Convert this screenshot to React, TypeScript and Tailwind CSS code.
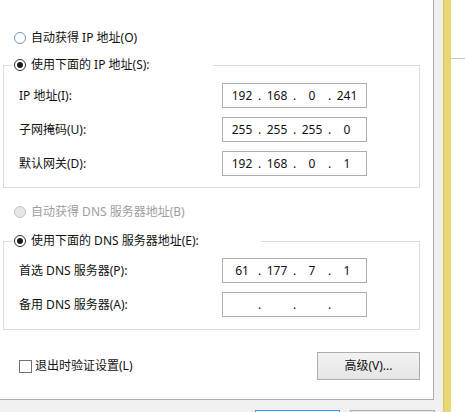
const font = { fontFamily: '"Noto Sans", "Noto Sans CJK SC", sans-serif' };

type Octets = [string, string, string, string];

const Radio = ({ checked, disabled }: { checked?: boolean; disabled?: boolean }) => {
  if (disabled) {
    return <span className="w-[12px] h-[12px] rounded-full border border-[#c4c4c4] bg-[#e6e6e6] shrink-0" />;
  }
  if (checked) {
    return (
      <span className="w-[12px] h-[12px] rounded-full border border-[#333333] bg-white shrink-0 flex items-center justify-center">
        <span className="w-[6px] h-[6px] rounded-full bg-[#1a1a1a]" />
      </span>
    );
  }
  return <span className="w-[12px] h-[12px] rounded-full border border-[#6f98c4] bg-white shrink-0" />;
};

const IpBox = ({ value }: { value: Octets }) => (
  <div className="w-[145px] h-[25px] border border-[#adadad] bg-white flex items-center pl-[6px] text-[12px] text-[#111]">
    {value.map((o, i) => (
      <div key={i} className="flex items-center">
        <span className="w-[26px] text-center">{o}</span>
        {i < 3 && <span className="w-[9px] text-center">.</span>}
      </div>
    ))}
  </div>
);

const Row = ({ label, value }: { label: string; value: Octets }) => (
  <div className="flex items-center h-[25px]">
    <span className="w-[218px] pl-[15px] text-[12px]">{label}</span>
    <IpBox value={value} />
  </div>
);

const Group = ({
  title,
  legendWidth,
  rows,
  top,
  bottom,
}: {
  title: string;
  legendWidth: string;
  rows: { label: string; value: Octets }[];
  top: string;
  bottom: string;
}) => (
  <fieldset className={`ml-[3px] w-[417px] border border-[#dcdcdc] ${bottom}`}>
    <legend className={`ml-[9px] h-[16px] px-[1px] flex items-center gap-[5px] text-[12px] bg-white ${legendWidth}`}>
      <Radio checked />
      <span>{title}</span>
    </legend>
    <div className={`flex flex-col gap-[9px] ${top}`}>
      {rows.map((r) => (
        <Row key={r.label} label={r.label} value={r.value} />
      ))}
    </div>
  </fieldset>
);

export default function App() {
  return (
    <div className="w-[465px] h-[412px] overflow-hidden flex bg-white text-[#111]" style={font}>
      {/* dialog */}
      <div className="w-[443px] h-full bg-[#f0f0f0] flex flex-col">
        <div className="shrink-0 w-[434px] h-[400px] bg-white border-r border-b border-[#adadad] pt-[30px]">
          <div className="flex items-center gap-[5px] h-[16px] pl-[14px] text-[12px]">
            <Radio />
            <span>自动获得 IP 地址(O)</span>
          </div>

          <div className="mt-[11px]">
            <Group
              title="使用下面的 IP 地址(S):"
              legendWidth="w-[200px]"
              top="mt-[10px]"
              bottom="pb-[11px]"
              rows={[
                { label: "IP 地址(I):", value: ["192", "168", "0", "241"] },
                { label: "子网掩码(U):", value: ["255", "255", "255", "0"] },
                { label: "默认网关(D):", value: ["192", "168", "0", "1"] },
              ]}
            />
          </div>

          <div className="mt-[16px] flex items-center gap-[5px] h-[16px] pl-[14px] text-[12px] text-[#9d9d9d]">
            <Radio disabled />
            <span>自动获得 DNS 服务器地址(B)</span>
          </div>

          <div className="mt-[13px]">
            <Group
              title="使用下面的 DNS 服务器地址(E):"
              legendWidth="w-[248px]"
              top="mt-[9px]"
              bottom="pb-[12px]"
              rows={[
                { label: "首选 DNS 服务器(P):", value: ["61", "177", "7", "1"] },
                { label: "备用 DNS 服务器(A):", value: ["", "", "", ""] },
              ]}
            />
          </div>

          <div className="mt-[22px] ml-[19px] w-[401px] h-[28px] flex items-center justify-between">
            <label className="flex items-center gap-[3px] text-[12px]">
              <span className="w-[13px] h-[13px] border border-[#707070] bg-white" />
              <span>退出时验证设置(L)</span>
            </label>
            <button className="w-[103px] h-[28px] border border-[#adadad] bg-gradient-to-b from-[#f2f2f2] to-[#e5e5e5] text-[12px] text-[#111]">
              高级(V)...
            </button>
          </div>
        </div>

        <div className="shrink-0 mt-[10px] flex gap-[10px] pl-[255px]">
          <div className="w-[85px] h-[23px] border border-[#3399ff] bg-[#e5f1fb]" />
          <div className="w-[85px] h-[23px] border border-[#adadad] bg-[#e5e5e5]" />
        </div>
      </div>

      {/* window frame */}
      <div className="w-[8px] h-full bg-[#e9d674] border-l border-[#d8c45c]" />
      <div className="flex-1 h-full bg-white pt-[58px]">
        <div className="h-px bg-[#c8c8c8]" />
      </div>
    </div>
  );
}
